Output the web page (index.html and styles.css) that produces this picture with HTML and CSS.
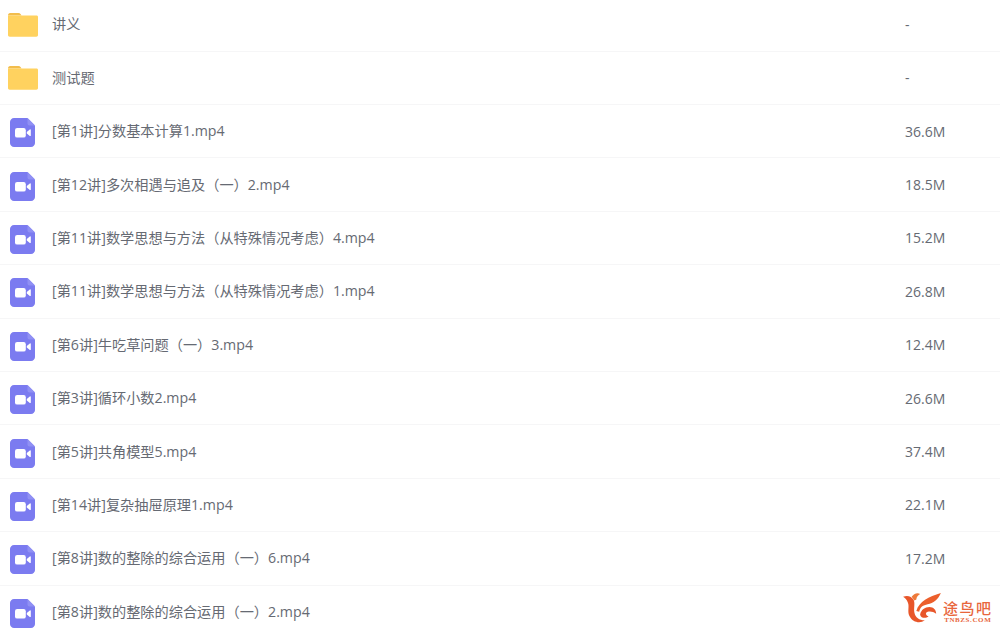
FILE: index.html
```html
<!DOCTYPE html>
<html lang="zh">
<head>
<meta charset="utf-8">
<title>文件列表</title>
<link rel="stylesheet" href="styles.css">
</head>
<body>
<svg class="defs" width="0" height="0" aria-hidden="true">
  <symbol id="folder" viewBox="0 0 30 25">
    <path d="M0 3.5C0 2 .8 1 2.2 1h8.2c1 0 1.7.4 2.3 1.2l.9 1.2H1z" fill="#f2bd4c"/>
    <path d="M0 3.6h28.6c.8 0 1.4.6 1.4 1.4v18c0 1-.7 1.700-1.700 1.700H1.700C.7 24.700 0 24 0 23z" fill="#ffd25f"/>
  </symbol>
  <symbol id="video" viewBox="0 0 25 29">
    <path d="M4 0h13.500L25 7.500V25c0 2.200-1.800 4-4 4H4c-2.200 0-4-1.800-4-4V4c0-2.200 1.800-4 4-4z" fill="#7b7bf0"/>
    <path d="M17.500 0L25 7.500h-5.500c-1.100 0-2-.9-2-2z" fill="#9090f4"/>
    <rect x="5" y="10" width="10.800" height="9.600" rx="2.200" fill="#fff"/>
    <path d="M16.800 13.900l3-2.400c.5-.4 1-.1 1 .5v5.400c0 .6-.5.900-1 .5l-3-2.400z" fill="#fff"/>
  </symbol>
</svg>
<main class="list">
  <div class="row"><svg class="icon folder"><use href="#folder"/></svg><span class="name">讲义</span><span class="size">-</span></div>
  <div class="row"><svg class="icon folder"><use href="#folder"/></svg><span class="name">测试题</span><span class="size">-</span></div>
  <div class="row"><svg class="icon video"><use href="#video"/></svg><span class="name">[第1讲]分数基本计算1.mp4</span><span class="size">36.6M</span></div>
  <div class="row"><svg class="icon video"><use href="#video"/></svg><span class="name">[第12讲]多次相遇与追及（一）2.mp4</span><span class="size">18.5M</span></div>
  <div class="row"><svg class="icon video"><use href="#video"/></svg><span class="name">[第11讲]数学思想与方法（从特殊情况考虑）4.mp4</span><span class="size">15.2M</span></div>
  <div class="row"><svg class="icon video"><use href="#video"/></svg><span class="name">[第11讲]数学思想与方法（从特殊情况考虑）1.mp4</span><span class="size">26.8M</span></div>
  <div class="row"><svg class="icon video"><use href="#video"/></svg><span class="name">[第6讲]牛吃草问题（一）3.mp4</span><span class="size">12.4M</span></div>
  <div class="row"><svg class="icon video"><use href="#video"/></svg><span class="name">[第3讲]循环小数2.mp4</span><span class="size">26.6M</span></div>
  <div class="row"><svg class="icon video"><use href="#video"/></svg><span class="name">[第5讲]共角模型5.mp4</span><span class="size">37.4M</span></div>
  <div class="row"><svg class="icon video"><use href="#video"/></svg><span class="name">[第14讲]复杂抽屉原理1.mp4</span><span class="size">22.1M</span></div>
  <div class="row"><svg class="icon video"><use href="#video"/></svg><span class="name">[第8讲]数的整除的综合运用（一）6.mp4</span><span class="size">17.2M</span></div>
  <div class="row"><svg class="icon video"><use href="#video"/></svg><span class="name">[第8讲]数的整除的综合运用（一）2.mp4</span><span class="size"></span></div>
</main>
<aside class="mark">
  <svg class="mark-logo" viewBox="0 0 42 36" aria-hidden="true">
    <path d="M1 5C6 3 10 5 12 8C14 12 12 17 13 22C14 27 18 30 24 30C19 34 11 32 8 26C5 21 8 15 6 11C5 8 3 6 1 5Z" fill="#e8562a"/>
    <path d="M10 5C12 2 16 0 19 2C17 3 15 5 15 8L13 9Z" fill="#ee7a3a"/>
    <path d="M15 20C18 10 28 5 41 1C38 8 33 12 27 13C22 14 19 16 18 21Z" fill="#ec5f2c"/>
    <path d="M19 24C20 19 24 16 29 16C33 16 36 19 36 23C33 21 30 20 27 21C24 22 25 25 28 26C25 28 20 28 19 24Z" fill="#e8562a"/>
  </svg>
  <div class="mark-text">
    <span class="mark-cn">途鸟吧</span>
    <span class="mark-en">TNBZS.COM</span>
  </div>
</aside>
</body>
</html>
```
FILE: styles.css
```css
* { box-sizing: border-box; }
html, body { margin: 0; padding: 0; height: 100%; overflow: hidden; background: #fff; }
body {
  position: relative;
  font-family: "Open Sans", "Noto Sans CJK SC", sans-serif;
  font-size: 14px;
  color: #666a73;
}
.defs { position: absolute; }
.list { margin-top: -1.800px; }
.row {
  display: flex;
  align-items: center;
  height: 53.400px;
  border-bottom: 1px solid #f6f6f7;
}
.icon { flex: none; display: block; }
.folder { width: 30px; height: 25px; margin-left: 8px; margin-right: 14px; }
.video { width: 25px; height: 29px; margin: 3px 17px 0 10px; }
.name { flex: 1; white-space: nowrap; font-size: 14.200px; padding-bottom: 2px; }
.size { width: 95px; flex: none; }
.mark {
  position: absolute;
  left: 901px;
  top: 592px;
  display: flex;
  align-items: flex-end;
  gap: 0;
}
.mark-logo { width: 42px; height: 34px; display: block; }
.mark-text { display: flex; flex-direction: column; align-items: center; color: #e8663c; margin-bottom: 2px; }
.mark-cn { font-family: "Noto Sans CJK SC", sans-serif; font-size: 15px; line-height: 16px; letter-spacing: 1.500px; font-weight: 500; }
.mark-en { font-family: "Liberation Serif", serif; font-size: 7px; line-height: 8px; font-weight: 700; letter-spacing: .6px; }
```
